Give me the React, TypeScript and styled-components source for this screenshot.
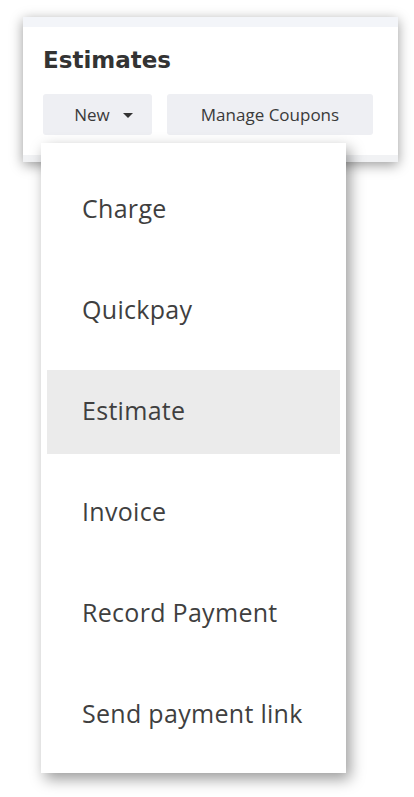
import React from "react";
import styled, { createGlobalStyle } from "styled-components";

const GlobalStyle = createGlobalStyle`
  html, body {
    margin: 0;
    padding: 0;
    background: #fff;
  }
  body {
    font-family: "Open Sans", "Liberation Sans", sans-serif;
  }
`;

const PageSC = styled.div`
  width: 414px;
  height: 797px;
  padding: 17px 0 0 23px;
  box-sizing: border-box;
  position: relative;
  overflow: hidden;
`;

const HeaderCardSC = styled.div`
  width: 375px;
  height: 145px;
  box-sizing: border-box;
  background: #fff;
  border-top: 10px solid #f3f5f9;
  border-bottom: 7px solid #f1f2f4;
  box-shadow: 0 3px 12px rgba(0, 0, 0, 0.4);
  padding: 18px 20px 0;
`;

const TitleSC = styled.h1`
  margin: 0;
  font-family: "DejaVu Sans", "Liberation Sans", sans-serif;
  font-weight: 700;
  font-size: 23px;
  line-height: 30px;
  color: #333;
`;

const ButtonRowSC = styled.div`
  display: flex;
  gap: 15px;
  margin-top: 19px;
`;

const ButtonSC = styled.button<{ width: number; shift?: number }>`
  width: ${({ width }) => width}px;
  height: 41px;
  border: none;
  border-radius: 3px;
  background: #eeeff3;
  color: #3a3a3a;
  font-family: "Open Sans", "Liberation Sans", sans-serif;
  font-size: 17px;
  display: flex;
  align-items: center;
  justify-content: center;
  gap: 13px;
  padding: 0 0 0 ${({ shift = 0 }) => shift}px;
`;

const CaretSC = styled.span`
  width: 0;
  height: 0;
  border-left: 5px solid transparent;
  border-right: 5px solid transparent;
  border-top: 5px solid #333;
  margin-top: 2px;
`;

const MenuSC = styled.ul`
  position: absolute;
  left: 41px;
  top: 143px;
  width: 305px;
  height: 630px;
  box-sizing: border-box;
  margin: 0;
  padding: 25px 6px 0;
  list-style: none;
  background: #fff;
  box-shadow: 4px 6px 14px rgba(0, 0, 0, 0.4);
  display: flex;
  flex-direction: column;
  gap: 17px;
`;

const MenuItemSC = styled.li<{ active?: boolean }>`
  height: 84px;
  box-sizing: border-box;
  flex: none;
  display: flex;
  align-items: center;
  padding: 0 0 4px 35px;
  background: ${({ active }) => (active ? "#ebebeb" : "transparent")};
  font-size: 25px;
  letter-spacing: 0.3px;
  color: #3f3f3f;
`;

const items = [
  "Charge",
  "Quickpay",
  "Estimate",
  "Invoice",
  "Record Payment",
  "Send payment link",
];

const App: React.FC = () => {
  return (
    <>
      <GlobalStyle />
      <PageSC>
        <HeaderCardSC>
          <TitleSC>Estimates</TitleSC>
          <ButtonRowSC>
            <ButtonSC width={109} shift={12}>
              New <CaretSC />
            </ButtonSC>
            <ButtonSC width={206}>Manage Coupons</ButtonSC>
          </ButtonRowSC>
        </HeaderCardSC>
        <MenuSC>
          {items.map((item) => (
            <MenuItemSC key={item} active={item === "Estimate"}>
              {item}
            </MenuItemSC>
          ))}
        </MenuSC>
      </PageSC>
    </>
  );
};

export default App;
